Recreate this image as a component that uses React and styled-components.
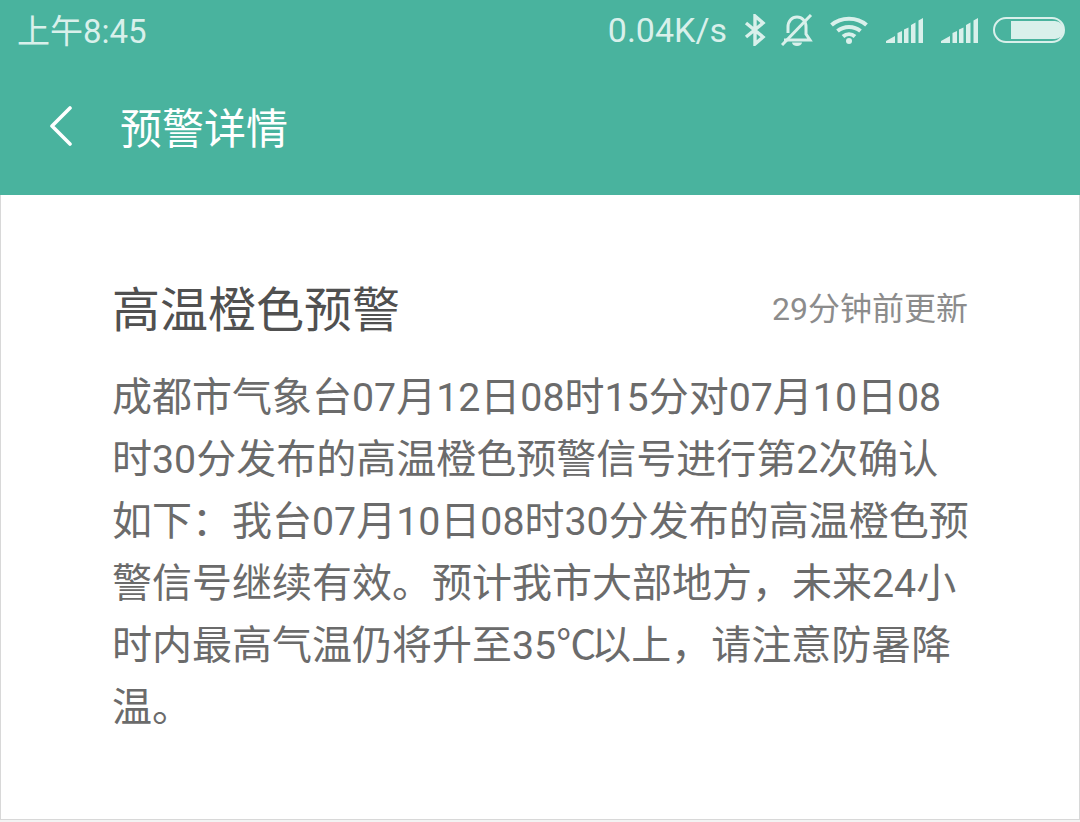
import React from 'react'
import styled, { createGlobalStyle } from 'styled-components'

const GlobalStyle = createGlobalStyle`
  html, body {
    margin: 0;
    padding: 0;
    background: #f3f3f3;
  }
  body {
    font-family: Roboto, "Noto Sans CJK SC", sans-serif;
  }
`

const Page = styled.div`
  width: 1080px;
  height: 822px;
  display: flex;
  flex-direction: column;
  overflow: hidden;
`

const Header = styled.header`
  height: 195px;
  flex: none;
  background: #49b39e;
`

const StatusBar = styled.div`
  height: 60px;
  display: flex;
  align-items: center;
  justify-content: space-between;
  padding: 0 15px 0 17px;
  color: #d9f0eb;
  font-size: 33px;
`

const Clock = styled.span`
  margin-top: -3px;
`

const StatusRight = styled.div`
  display: flex;
  align-items: center;
`

const Speed = styled.span`
  margin-right: 17px;
  font-size: 34px;
`

const Icon = styled.svg`
  display: block;
  flex: none;
  margin-left: ${(p) => p.$gap || 0}px;
`

const NavBar = styled.div`
  height: 135px;
  display: flex;
  align-items: center;
  padding: 0 0 4px 48px;
  box-sizing: border-box;
  color: #fff;
`

const NavTitle = styled.h1`
  margin: 0 0 0 46px;
  font-size: 42px;
  font-weight: 400;
`

const Card = styled.main`
  height: 625px;
  box-sizing: border-box;
  flex: none;
  background: #fff;
  border: 1px solid #d8d8d8;
  border-top: none;
  padding: 75px 110px 0 111px;
`

const TitleRow = styled.div`
  display: flex;
  align-items: center;
  justify-content: space-between;
  height: 72px;
  padding-right: 1px;
`

const WarnTitle = styled.h2`
  margin: 0;
  font-size: 48px;
  font-weight: 400;
  color: #505050;
`

const Updated = styled.span`
  font-size: 32px;
  color: #8c8c8c;
`

const Body = styled.div`
  margin: 25px 0 0;
  font-size: 40px;
  color: #6b6b6b;
`

const Line = styled.div`
  height: 62px;
  line-height: 62px;
  white-space: nowrap;
`

// digits in the reference run a little narrower than Roboto at 40px
const Num = styled.span`
  font-size: 39.300px;
  line-height: 1;
`

const Celsius = styled.span`
  letter-spacing: -5px;
  line-height: 1;
`

function SignalIcon({ gap }) {
  return (
    <Icon $gap={gap} width="37" height="25" viewBox="0 0 37 25" fill="#d9f0eb">
      <path d="M0 25v-2l9-5v7zM11.500 25V15l4.500-2v12zM18 25V11.500l4.500-2V25zM25 25V7l4.500-2.500V25zM32.500 25V2.500L37 0v25z" />
    </Icon>
  )
}

export default function App() {
  return (
    <Page>
      <GlobalStyle />
      <Header>
        <StatusBar>
          <Clock>上午8:45</Clock>
          <StatusRight>
            <Speed>0.04K/s</Speed>
            <Icon width="22" height="32" viewBox="0 0 22 32" fill="none" stroke="#d9f0eb" strokeWidth="3.400">
              <path d="M2 9l17 14-8 7V2l8 7L2 23" />
            </Icon>
            <Icon $gap={15} width="32" height="32" viewBox="0 0 32 32" fill="none" stroke="#d9f0eb" strokeWidth="3">
              <path d="M7 19V13C7 7 11 3 16 3s9 4 9 10v7l4 6H3" />
              <path d="M1 31L30 1" />
              <path d="M11 28.500h10a5 3.500 0 0 1-10 0z" fill="#d9f0eb" stroke="none" />
            </Icon>
            <Icon $gap={17} width="38" height="28" viewBox="0 0 38 28" fill="none" stroke="#d9f0eb" strokeWidth="4">
              <path d="M1.500 9C11 0.500 27 0.500 36.500 9" />
              <path d="M7.500 15C14 9.500 24 9.500 30.500 15" />
              <path d="M13 20.500c3.500-3 8.500-3 12 0" />
              <circle cx="19" cy="25" r="3" fill="#d9f0eb" stroke="none" />
            </Icon>
            <SignalIcon gap={18} />
            <SignalIcon gap={18} />
            <Icon $gap={15} width="72" height="26" viewBox="0 0 72 26">
              <rect x="1" y="1" width="70" height="24" rx="12" fill="none" stroke="#d9f0eb" strokeWidth="2" />
              <path d="M18 4h44a9 9 0 0 1 0 18H18z" fill="#d9f0eb" />
            </Icon>
          </StatusRight>
        </StatusBar>
        <NavBar>
          <Icon width="26" height="40" viewBox="0 0 26 40" fill="none" stroke="#fff" strokeWidth="3.600" strokeLinecap="round" strokeLinejoin="round">
            <path d="M22 2L4 20l18 18" />
          </Icon>
          <NavTitle>预警详情</NavTitle>
        </NavBar>
      </Header>
      <Card>
        <TitleRow>
          <WarnTitle>高温橙色预警</WarnTitle>
          <Updated>29分钟前更新</Updated>
        </TitleRow>
        <Body>
          <Line>成都市气象台<Num>07</Num>月<Num>12</Num>日<Num>08</Num>时<Num>15</Num>分对<Num>07</Num>月<Num>10</Num>日<Num>08</Num></Line>
          <Line>时<Num>30</Num>分发布的高温橙色预警信号进行第<Num>2</Num>次确认</Line>
          <Line>如下：我台<Num>07</Num>月<Num>10</Num>日<Num>08</Num>时<Num>30</Num>分发布的高温橙色预</Line>
          <Line>警信号继续有效。预计我市大部地方，未来<Num>24</Num>小</Line>
          <Line>时内最高气温仍将升至<Num>35</Num><Celsius>℃</Celsius>以上，请注意防暑降</Line>
          <Line>温。</Line>
        </Body>
      </Card>
    </Page>
  )
}
